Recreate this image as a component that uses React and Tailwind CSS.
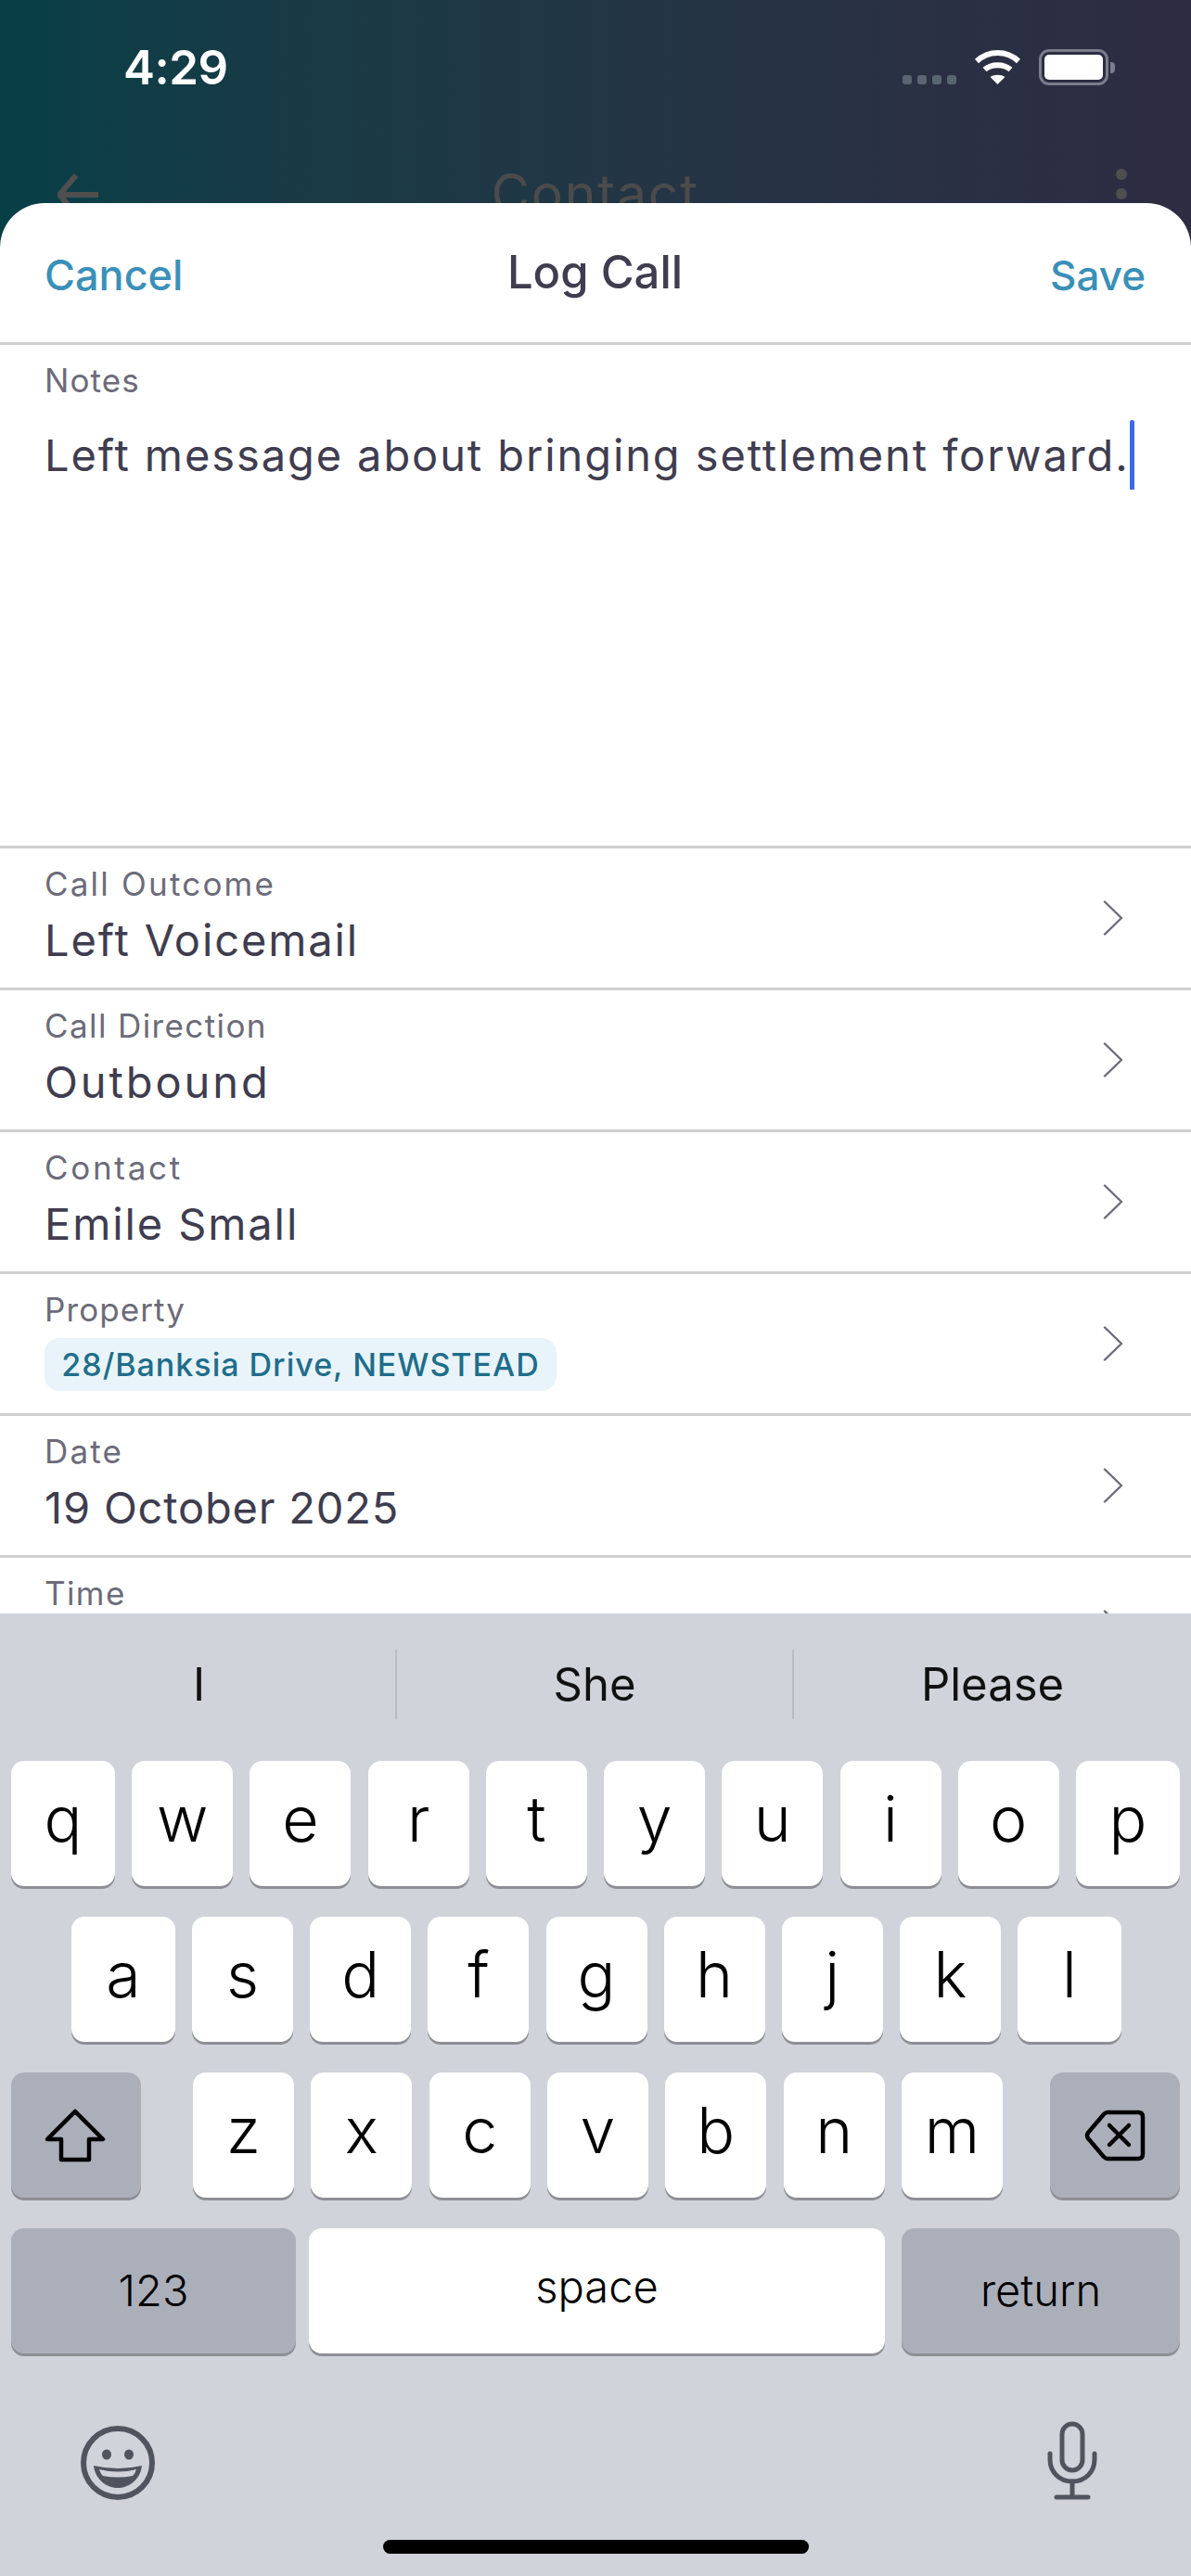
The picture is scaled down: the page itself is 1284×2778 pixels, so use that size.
import React from "react";

const Chevron = () => (
  <svg width="22" height="38" viewBox="0 0 22 38" fill="none" stroke="#6c6b79" strokeWidth="2.4" strokeLinecap="round" strokeLinejoin="round">
    <path d="M2 1.5 L20 19 L2 36.5" />
  </svg>
);

const Row = ({ label, value, pill, track = "tracking-[1.9px]", labelTrack = "tracking-[1.4px]" }) => (
  <div className="h-[153px] shrink-0 border-b-[3px] border-[#cfcfcf] flex items-center justify-between pl-[48px] pr-[73px]">
    <div className="h-full pt-[18px]">
      <div className={`text-[35px] leading-[40px] ${labelTrack} text-[#6c6b79]`}>{label}</div>
      {value && <div className={`mt-4 text-[47px] leading-[50px] ${track} text-[#3f3d4f]`}>{value}</div>}
      {pill && (
        <div className="mt-[11px] h-[57px] w-[552px] rounded-[16px] bg-[#e8f4f9] flex items-center justify-center text-[34px] tracking-[1px] font-medium text-[#1f6d8a] whitespace-nowrap">
          {pill}
        </div>
      )}
    </div>
    <Chevron />
  </div>
);

const Key = ({ children, w = "w-[109px]" }) => (
  <div className={`${w} h-[135px] rounded-[14px] bg-white shadow-[0_3px_0_#8e8f95] flex items-center justify-center pb-3 text-[68px] font-light leading-none text-black`}>
    {children}
  </div>
);

const Fn = ({ children, w, className = "" }) => (
  <div className={`${w} ${className} h-[135px] rounded-[14px] bg-[#abafba] shadow-[0_3px_0_#8e8f95] flex items-center justify-center text-black`}>
    {children}
  </div>
);

const Letters = ({ keys, className, edge }) => (
  <div className={className}>
    {keys.map((k, i) => (
      <Key key={k} w={edge && (i === 0 || i === keys.length - 1) ? "w-[112px]" : "w-[109px]"}>{k}</Key>
    ))}
  </div>
);

export default function App() {
  return (
    <div className="w-[1284px] h-[2778px] overflow-hidden flex flex-col bg-white font-['Inter',sans-serif]">
      {/* backdrop: dimmed screen behind the sheet */}
      <div className="h-[219px] shrink-0 overflow-hidden bg-gradient-to-r from-[#073f47] to-[#2e2c42]">
        <div className="h-[170px] pl-[133px] pr-[82px] pt-[43px] flex items-start justify-between">
          <div className="text-[51px] leading-[60px] font-semibold text-white tracking-[-0.5px]">4:29</div>
          <div className="mt-[10px] flex items-start">
            <div className="mt-[28px] flex gap-[6px]">
              <div className="w-[10px] h-[10px] rounded-[3px] bg-[#5a6573]" />
              <div className="w-[10px] h-[10px] rounded-[3px] bg-[#5a6573]" />
              <div className="w-[10px] h-[10px] rounded-[3px] bg-[#5a6573]" />
              <div className="w-[10px] h-[10px] rounded-[3px] bg-[#5a6573]" />
            </div>
            <svg className="ml-[19px] mt-[1px]" width="51" height="37" viewBox="0 0 51 37" fill="none">
              <path d="M3 12 C16 0 35 0 48 12" stroke="white" strokeWidth="6" />
              <path d="M11.5 21 C19 14.5 32 14.5 39.5 21" stroke="white" strokeWidth="6" />
              <path d="M17.5 29 C22 26 29 26 33.5 29 L25.5 37 Z" fill="white" />
            </svg>
            <div className="ml-[19px] flex items-center">
              <div className="w-[75px] h-[39px] rounded-[11px] border-[3px] border-[#7b7d8c] p-[3px]">
                <div className="w-full h-full rounded-[5px] bg-white" />
              </div>
              <div className="ml-[2px] w-[5px] h-[12px] rounded-r-[4px] bg-[#7b7d8c]" />
            </div>
          </div>
        </div>
        <div className="h-[80px] pl-[62px] pr-[69px] flex items-center">
          <div className="flex-1">
            <svg width="44" height="50" viewBox="0 0 44 50" fill="none" stroke="#4f4f4f" strokeWidth="6">
              <path d="M44 25 H2 M20 4 L2 25 L20 46" />
            </svg>
          </div>
          <div className="ml-[6px] -mt-[3px] text-[57px] leading-[60px] tracking-[1.8px] text-[#4b4b4b]">Contact</div>
          <div className="flex-1 flex justify-end">
            <div className="flex flex-col gap-[9px] -mt-[2px]">
              <div className="w-[12px] h-[12px] rounded-full bg-[#4f4f4f]" />
              <div className="w-[12px] h-[12px] rounded-full bg-[#4f4f4f]" />
              <div className="w-[12px] h-[12px] rounded-full bg-[#4f4f4f]" />
            </div>
          </div>
        </div>
      </div>

      <div className="h-[1521px] shrink-0 overflow-hidden bg-gradient-to-r from-[#073f47] to-[#2e2c42]">
        <div className="h-full overflow-hidden rounded-t-[48px] bg-white flex flex-col">
          <div className="h-[153px] shrink-0 border-b-[3px] border-[#cfcfcf] pl-[48px] pr-[49px] flex items-center">
            <div className="flex-1 text-[45px] font-medium text-[#3a90b8] mt-[6px]">Cancel</div>
            <div className="text-[49px] font-medium text-[#3f3d4f]">Log Call</div>
            <div className="flex-1 text-right text-[44px] font-medium text-[#3a90b8] mt-[6px]">Save</div>
          </div>
          <div className="h-[543px] shrink-0 border-b-[3px] border-[#cfcfcf] pl-[48px] pt-[18px]">
            <div className="text-[35px] leading-[40px] tracking-[1.1px] text-[#6c6b79]">Notes</div>
            <div className="mt-9 flex items-start">
              <div className="text-[47px] leading-[50px] tracking-[1.9px] text-[#3f3d4f] whitespace-nowrap">Left message about bringing settlement forward.</div>
              <div className="w-[5px] h-[75px] -mt-[13px] rounded-t-[2px] bg-[#3d6be6]" />
            </div>
          </div>
          <Row label="Call Outcome" value="Left Voicemail" labelTrack="tracking-[2.2px]" />
          <Row label="Call Direction" value="Outbound" track="tracking-[2.9px]" />
          <Row label="Contact" value="Emile Small" labelTrack="tracking-[2.7px]" />
          <Row label="Property" pill="28/Banksia Drive, NEWSTEAD" labelTrack="tracking-[1.1px]" />
          <Row label="Date" value="19 October 2025" track="tracking-[0.8px]" labelTrack="tracking-[2.2px]" />
          <Row label="Time" />
        </div>
      </div>

      <div className="h-[1038px] shrink-0 bg-[#d0d3da] flex flex-col">
        <div className="h-[159px] shrink-0 flex items-center pb-[6px] text-[49px] text-[#111]">
          <div className="w-[428px] h-[75px] pl-[3px] flex items-center justify-center border-r-2 border-[#b9bcc4]">I</div>
          <div className="w-[428px] h-[75px] flex items-center justify-center border-r-2 border-[#b9bcc4]">She</div>
          <div className="flex-1 h-[75px] flex items-center justify-center">Please</div>
        </div>
        <div className="flex flex-col gap-[33px]">
          <Letters edge keys={["q", "w", "e", "r", "t", "y", "u", "i", "o", "p"]} className="px-[12px] flex justify-between" />
          <Letters edge keys={["a", "s", "d", "f", "g", "h", "j", "k", "l"]} className="pl-[77px] pr-[75px] flex justify-between" />
          <div className="px-[12px] flex justify-between">
            <Fn w="w-[140px]">
              <svg className="mr-[2px]" width="66" height="58" viewBox="0 0 66 58" fill="none" stroke="black" strokeWidth="4.5" strokeLinejoin="round">
                <path d="M33 3 L63 33 H48 V55 H18 V33 H3 Z" />
              </svg>
            </Fn>
            <Letters keys={["z", "x", "c", "v", "b", "n", "m"]} className="ml-[5px] w-[873px] flex justify-between" />
            <Fn w="w-[140px]">
              <svg width="66" height="56" viewBox="0 0 66 56" fill="none" stroke="black" strokeWidth="4.5" strokeLinejoin="round" strokeLinecap="round">
                <path d="M25 3 H58 Q63 3 63 8 V48 Q63 53 58 53 H25 Q23 53 21 51 L4 31 Q2 28 4 25 L21 5 Q23 3 25 3 Z" />
                <path d="M27 17 L48 38 M48 17 L27 38" />
              </svg>
            </Fn>
          </div>
          <div className="px-[12px] flex text-[47px] font-light">
            <Fn w="w-[307px]">123</Fn>
            <div className="ml-[14px] w-[621px] h-[135px] rounded-[14px] bg-white shadow-[0_3px_0_#8e8f95] flex items-center justify-center pb-[8px] text-black">space</div>
            <Fn w="w-[300px]" className="ml-auto">return</Fn>
          </div>
        </div>
        <div className="mt-[72px] pl-[87px] pr-[100px] flex items-center justify-between">
          <svg className="mt-[5px]" width="80" height="80" viewBox="0 0 80 80" fill="none">
            <circle cx="40" cy="40" r="37" stroke="#50545e" strokeWidth="6" />
            <ellipse cx="28" cy="31" rx="5" ry="5.5" fill="#50545e" />
            <ellipse cx="52" cy="31" rx="5" ry="5.5" fill="#50545e" />
            <path d="M14 43 Q40 49 66 43 C64 60 50 67 40 67 C30 67 16 60 14 43 Z" fill="#50545e" />
            <path d="M20 47 Q40 52 60 47 C59 50 58 52 56 54 Q40 57 24 54 C22 52 21 50 20 47 Z" fill="#d0d3da" />
          </svg>
          <svg width="56" height="86" viewBox="0 0 56 86" fill="none" stroke="#50545e" strokeWidth="5" strokeLinecap="round">
            <rect x="17" y="4" width="22" height="50" rx="11" />
            <path d="M4 36 V42 C4 56 14 66 28 66 C42 66 52 56 52 42 V36" />
            <path d="M28 66 V83 M11 83 H45" />
          </svg>
        </div>
        <div className="mt-[43px] mx-auto w-[459px] h-[15px] rounded-full bg-black" />
      </div>
    </div>
  );
}
